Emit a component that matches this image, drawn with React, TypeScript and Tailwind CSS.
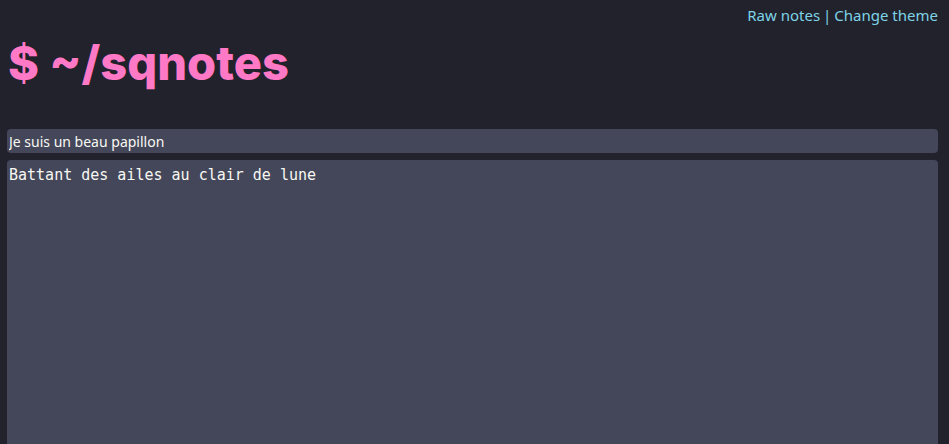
export default function App() {
  return (
    <div className="min-h-screen bg-[#21222c] pr-[11px] pl-[7px] font-['Noto_Sans',sans-serif]">
      <div className="flex justify-end pt-[4px] text-[15px] leading-[22px] text-[#7fd3e6]">
        <a>Raw notes</a>
        <span className="px-[3px]">|</span>
        <a>Change theme</a>
      </div>
      <h1 className="mt-[7px] pl-[1px] font-['Inter',sans-serif] text-[47px] font-extrabold leading-[60px] text-[#ff79c6]">
        $ ~/sqnotes
      </h1>
      <div className="mt-[36px] flex flex-col gap-[7px]">
        <input
          className="h-[24px] w-full rounded-[4px] bg-[#44475a] px-[2px] text-[14px] text-[#f8f8f2] outline-none"
          defaultValue="Je suis un beau papillon"
        />
        <textarea
          className="h-[300px] w-full resize-none rounded-[4px] bg-[#44475a] px-[2px] pt-[4px] font-['DejaVu_Sans_Mono',monospace] text-[15px] text-[#f8f8f2] outline-none"
          defaultValue="Battant des ailes au clair de lune"
        />
      </div>
    </div>
  );
}
